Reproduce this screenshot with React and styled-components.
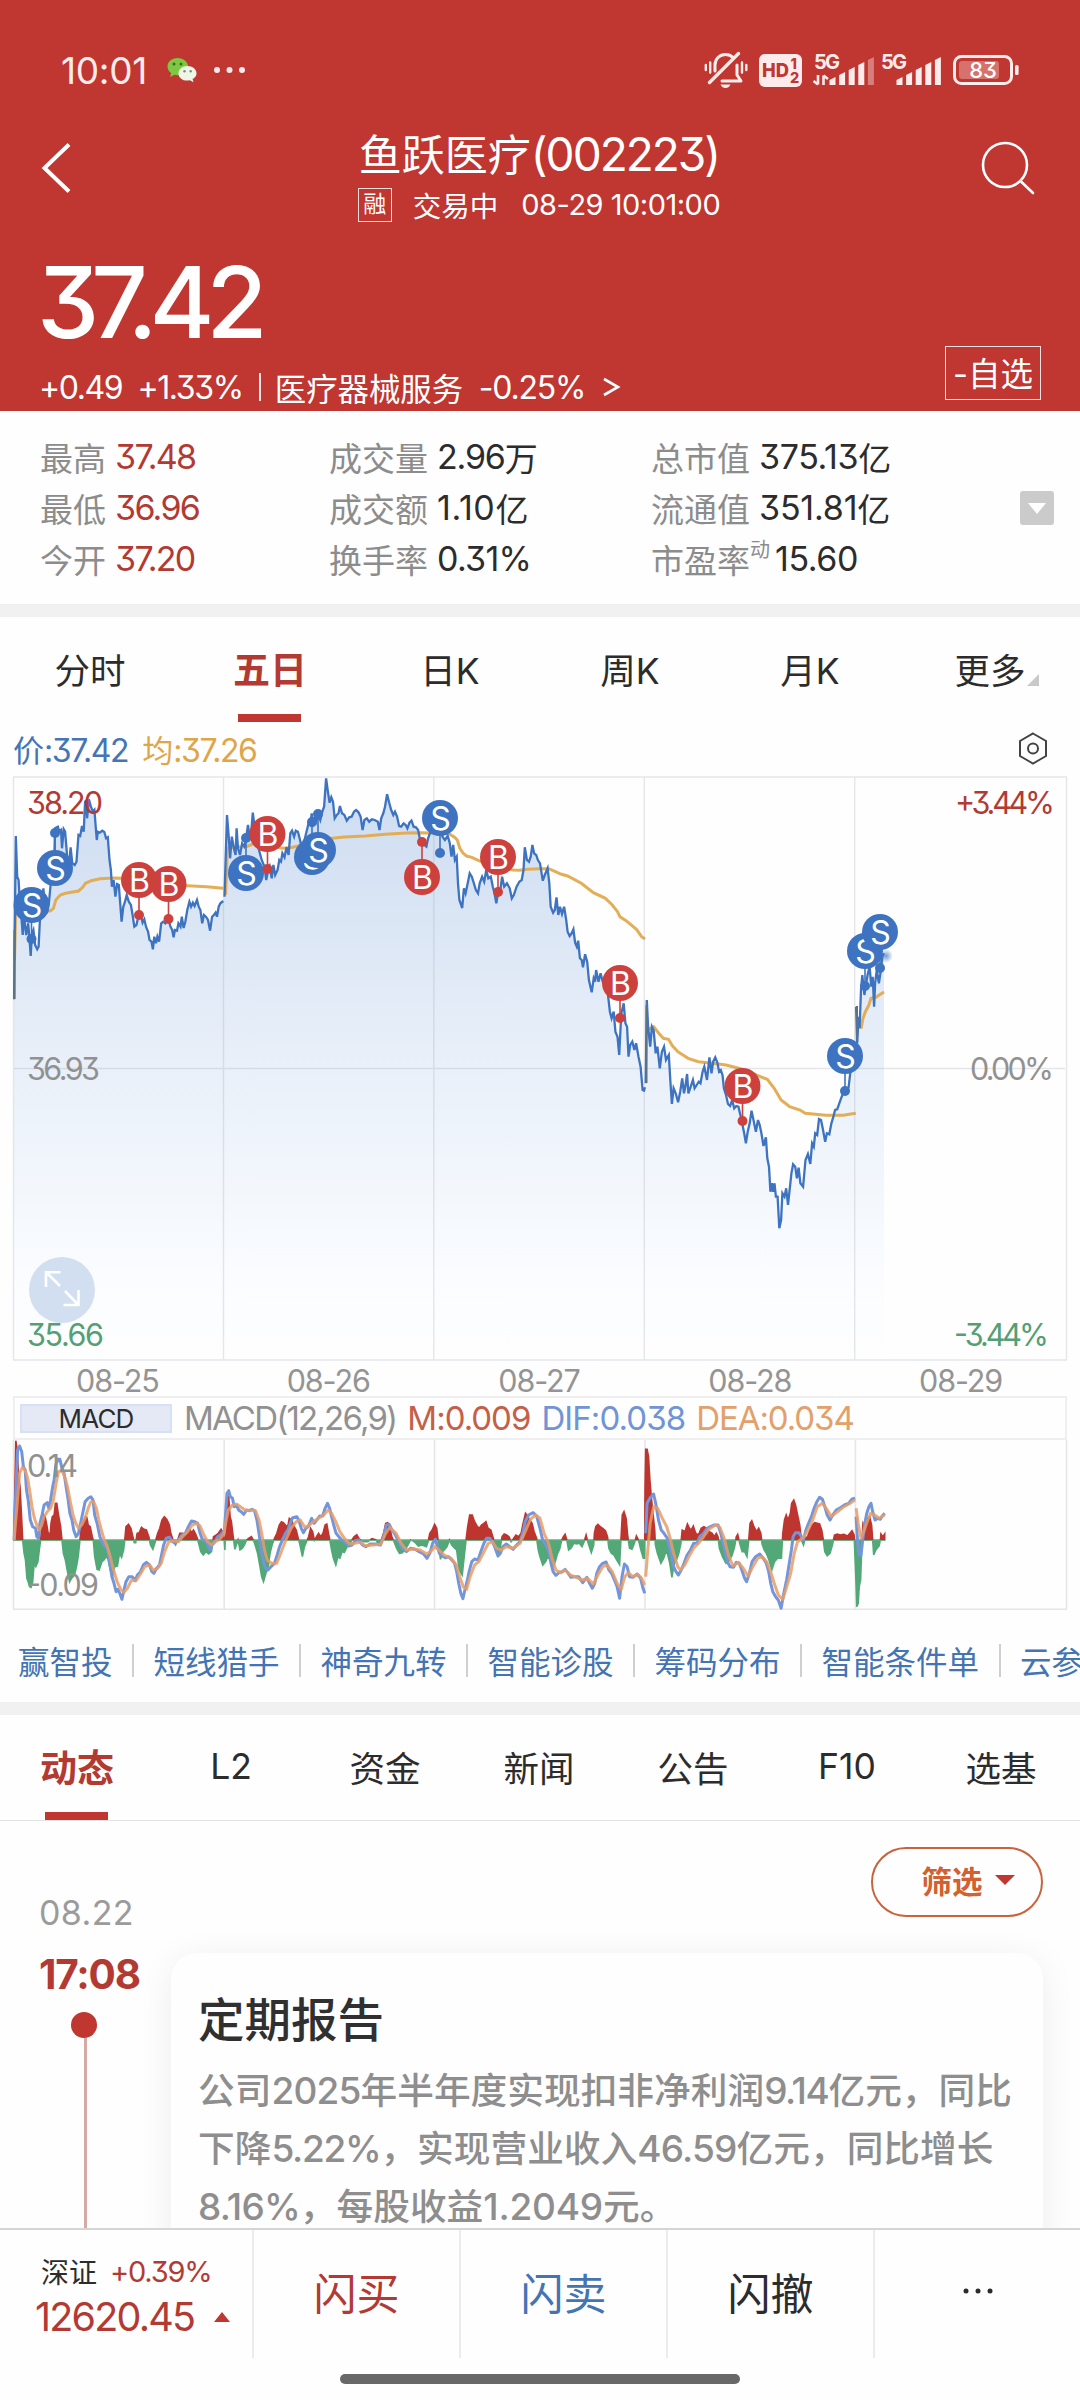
import React from "react";
import styled, { createGlobalStyle, css } from "styled-components";

const RED = "#c03630";
const UP = "#b33a33";
const DOWN = "#549f73";
const BLUE = "#3d73c0";
const ORANGE = "#e2aa4c";
const FONT = `Inter, "Noto Sans CJK SC", sans-serif`;

const GlobalStyle = createGlobalStyle`
  * {
    box-sizing: border-box;
  }
  body {
    margin: 0;
    background: #fefefe;
    font-family: ${FONT};
    font-feature-settings: "cv09" 1;
    color: #2c2c2c;
  }
  svg {
    display: block;
    flex: none;
    overflow: visible;
  }
`;

const Page = styled.div`
  width: 1080px;
  height: 2400px;
  overflow: hidden;
  display: flex;
  flex-direction: column;
  background: #fefefe;
`;

const Num = styled.span`
  font-size: ${(p) => p.$size}px;
  letter-spacing: ${(p) => p.$ls || 0}px;
  font-weight: ${(p) => p.$weight || 400};
  white-space: pre;
`;

/* ---------- header ---------- */

const Header = styled.header`
  height: 411px;
  flex: none;
  background: ${RED};
  color: #fff;
`;

const StatusBar = styled.div`
  height: 118px;
  padding: 40px 61px 18px 61px;
  display: flex;
  align-items: center;
  justify-content: space-between;
  color: #fdeceb;
`;

const StatusSide = styled.div`
  display: flex;
  align-items: center;
  height: 60px;
`;

const StatusIcons = styled(StatusSide)`
  gap: 11px;
  svg + svg:nth-child(4) {
    margin-left: -6px;
  }
`;

const NavBar = styled.div`
  height: 112px;
  display: grid;
  grid-template-columns: 1fr auto 1fr;
  padding: 0 42px 0 40px;
  > svg {
    margin-top: 24px;
  }
  > svg:last-child {
    justify-self: end;
  }
`;

const NavTitle = styled.div`
  display: flex;
  flex-direction: column;
  align-items: center;
  margin-top: 8px;
  h1 {
    margin: 0;
    font-size: 43px;
    font-weight: 400;
    line-height: 56px;
    white-space: nowrap;
  }
`;

const NavSub = styled.div`
  display: flex;
  align-items: center;
  height: 43px;
  font-size: 28.5px;
  white-space: pre;
`;

const MarginTag = styled.span`
  width: 34px;
  height: 34px;
  border: 1.5px solid #f7dedd;
  font-size: 23px;
  line-height: 31px;
  text-align: center;
  margin-right: 21px;
`;

const Quote = styled.div`
  height: 181px;
  display: flex;
  justify-content: space-between;
  align-items: flex-end;
  padding: 0 39px 0 39px;
`;

const Price = styled.div`
  height: 133px;
  padding-top: 10px;
  margin-left: -2px;
  line-height: 124px;
  font-size: 99px;
  font-weight: 450;
  letter-spacing: -8px;
`;

const Change = styled.div`
  height: 48px;
  display: flex;
  align-items: center;
  font-size: 31.4px;
  white-space: pre;
  svg {
    margin-left: 18px;
  }
`;

const Divider = styled.i`
  width: 2px;
  height: 28px;
  background: #fbe5e4;
  margin: 0 14px 0 16px;
`;

const WatchButton = styled.div`
  width: 96px;
  height: 54px;
  margin-bottom: 11px;
  padding-bottom: 4px;
  border: 1.5px solid #f9e2e1;
  display: flex;
  align-items: center;
  justify-content: center;
  font-size: 32.5px;
`;

/* ---------- stats ---------- */

const Stats = styled.section`
  height: 193px;
  flex: none;
  padding: 20px 0 0 40px;
  display: grid;
  grid-template-columns: 289px 322px 369px 34px;
`;

const StatColumn = styled.div`
  display: flex;
  flex-direction: column;
`;

const Stat = styled.div`
  height: 51px;
  display: flex;
  align-items: center;
  font-size: 33px;
  white-space: nowrap;
  color: ${(p) => (p.$up ? UP : "#2c2c2c")};
  label {
    display: flex;
    align-items: flex-start;
    color: #8c8c8c;
    margin-right: ${(p) => (p.$tight ? 5 : 9)}px;
  }
  sup {
    font-size: 20px;
    line-height: 24px;
    margin-top: 3px;
  }
`;

const ExpandStats = styled.div`
  width: 34px;
  height: 34px;
  margin-top: 60px;
  border-radius: 3px;
  background: #cbcbcb;
  display: flex;
  align-items: center;
  justify-content: center;
`;

const Band = styled.div`
  height: 13px;
  flex: none;
  background: #f1f1f1;
`;

/* ---------- tabs ---------- */

const TabRow = styled.nav`
  height: ${(p) => (p.$line ? 106 : 105)}px;
  flex: none;
  display: flex;
  ${(p) =>
    p.$line &&
    css`
      border-bottom: 1px solid #e3e3e3;
    `}
`;

const Tab = styled.div`
  position: relative;
  width: ${(p) => p.$w}px;
  height: 105px;
  padding-bottom: 3px;
  display: flex;
  align-items: center;
  justify-content: center;
  font-size: ${(p) => (p.$active ? 37 : 35.5)}px;
  font-weight: ${(p) => (p.$active ? 700 : 400)};
  color: ${(p) => (p.$active ? UP : "#2c2c2c")};
  white-space: nowrap;
  &::after {
    content: "";
    display: ${(p) => (p.$active ? "block" : "none")};
    position: absolute;
    bottom: 0;
    left: calc(50% - 32px);
    width: 63px;
    height: 8px;
    background: ${RED};
  }
`;

const Corner = styled.i`
  position: absolute;
  left: 127px;
  top: 57px;
  border-left: 12px solid transparent;
  border-bottom: 12px solid #c9c9c9;
`;

/* ---------- charts ---------- */

const Legend = styled.div`
  height: 54px;
  flex: none;
  padding: 0 32px 1px 13px;
  display: flex;
  align-items: center;
  justify-content: space-between;
  font-size: 31px;
`;

const LegendItem = styled.span`
  color: ${(p) => p.$color};
  margin-right: 14px;
`;

const Dates = styled.div`
  height: 35px;
  flex: none;
  margin: 0 14px 0 12px;
  padding-top: 1px;
  display: grid;
  grid-template-columns: repeat(5, 1fr);
  place-items: center;
  color: #949494;
`;

const MacdHead = styled.div`
  height: 44px;
  flex: none;
  margin: 0 13px;
  border: 2px solid #efefef;
  padding-left: 5px;
  display: flex;
  align-items: center;
`;

const IndicatorButton = styled.div`
  width: 152px;
  height: 29px;
  background: #e4e9f5;
  border: 2px solid #d7e0f4;
  display: flex;
  align-items: center;
  justify-content: center;
  margin-right: 12px;
`;

const MacdValue = styled(Num)`
  color: ${(p) => p.$color};
  margin-right: 11px;
`;

/* ---------- tool links ---------- */

const Links = styled.div`
  height: 92px;
  flex: none;
  padding: 8px 0 0 18px;
  display: flex;
  align-items: center;
  overflow: hidden;
`;

const ToolLink = styled.span`
  flex: none;
  font-size: 31.5px;
  color: #4374b3;
  white-space: nowrap;
  display: flex;
  align-items: center;
  & + &::before {
    content: "";
    width: 2px;
    height: 33px;
    margin: 0 19.5px;
    background: #cfcfcf;
  }
`;

/* ---------- feed ---------- */

const Feed = styled.section`
  height: 407px;
  flex: none;
  overflow: hidden;
  display: grid;
  grid-template-columns: 171px 872px;
`;

const Timeline = styled.div`
  padding: 72px 0 0 39px;
  height: 407px;
  display: flex;
  flex-direction: column;
`;

const FeedDate = styled.div`
  height: 40px;
  line-height: 40px;
  color: #9b9b9b;
`;

const FeedTime = styled.div`
  height: 50px;
  margin-top: 17px;
  line-height: 50px;
  color: ${UP};
`;

const TimeDot = styled.i`
  width: 26px;
  height: 26px;
  flex: none;
  margin: 12px 0 0 32px;
  border-radius: 50%;
  background: ${RED};
`;

const TimeLine = styled.i`
  flex: 1;
  width: 3px;
  margin-left: 45px;
  background: #d5a9a6;
`;

const FilterButton = styled.div`
  width: 172px;
  height: 70px;
  margin: 26px 0 36px auto;
  padding: 0 0 4px 22px;
  border: 2px solid #c9623d;
  border-radius: 35px;
  display: flex;
  align-items: center;
  justify-content: center;
  gap: 12px;
  font-size: 30.5px;
  font-weight: 600;
  color: #d3602f;
`;

const Card = styled.article`
  height: 330px;
  padding: 42px 20px 0 27px;
  border-radius: 26px;
  background: #fefefe;
  box-shadow: 0 6px 36px rgba(0, 0, 0, 0.07);
  h2 {
    margin: 0;
    font-size: 46.5px;
    line-height: 50px;
    font-weight: 500;
    color: #303030;
  }
  p {
    margin: 17px 0 0;
    font-size: 36.7px;
    line-height: 58px;
    font-weight: 500;
    color: #8e8e8e;
    white-space: nowrap;
  }
`;

/* ---------- footer ---------- */

const Footer = styled.footer`
  flex: 1;
  border-top: 2px solid #d5d5d5;
  background: #fefefe;
  display: flex;
  flex-direction: column;
  align-items: center;
`;

const Actions = styled.div`
  width: 1080px;
  height: 128px;
  display: flex;
`;

const IndexCell = styled.div`
  width: 252px;
  padding: 20px 0 0 41px;
  display: flex;
  flex-direction: column;
  gap: 4px;
  color: ${UP};
`;

const IndexRow = styled.div`
  height: 42px;
  margin-left: ${(p) => p.$shift || 0}px;
  display: flex;
  align-items: center;
  font-size: 28px;
  em {
    font-style: normal;
    color: #2c2c2c;
    margin-right: 13px;
  }
  svg {
    margin: 0 0 0 20px;
  }
`;

const Action = styled.div`
  width: 207px;
  padding-bottom: 6px;
  border-left: 2px solid #ececec;
  display: flex;
  align-items: center;
  justify-content: center;
  font-size: 43px;
  color: ${(p) => p.$color || "#2c2c2c"};
`;

const HomeBar = styled.div`
  width: 400px;
  height: 10px;
  margin-top: 16px;
  border-radius: 5px;
  background: #686868;
`;

/* ---------- icons ---------- */

const WechatIcon = () => (
  <svg width="30" height="26" viewBox="0 0 30 26">
    <path d="M10.5 1C4.7 1 .5 4.8.5 9.6c0 2.700 1.500 5 3.600 6.600L3.200 20l4.200-2.200c6.500 1.500 13.600-1.700 13.600-8.200C21 4.800 16.300 1 10.500 1z" fill="#7cc843" />
    <circle cx="7" cy="7" r="1.500" fill="#3d6a20" />
    <circle cx="14" cy="7" r="1.500" fill="#3d6a20" />
    <path d="M20.500 9c-5 0-9 3.200-9 7.400 0 4.900 5.500 8.300 11.400 6.900l3.600 2-.9-3.200c2.300-1.300 3.900-3.300 3.900-5.700C29.500 12.200 25.500 9 20.500 9z" fill="#eef6e8" />
    <circle cx="17.500" cy="14.300" r="1.200" fill="#7c8a76" />
    <circle cx="23.700" cy="14.300" r="1.200" fill="#7c8a76" />
  </svg>
);

const MuteIcon = () => (
  <svg width="44" height="38" viewBox="0 0 44 38" fill="none" stroke="#fdeceb" strokeWidth="3" strokeLinecap="round" strokeLinejoin="round">
    <path d="M11 20v-6c0-6 4.500-10.500 10.500-10.500 3 0 5.500 1 7.500 3M33 14v10l4 6H18" />
    <path d="M5.500 31.500 34.500 2.500" strokeWidth="3.400" />
    <path d="M16.500 33.500h10c-1 2.500-3 3.500-5 3.500s-4-1-5-3.500z" fill="#fdeceb" stroke="none" />
    <path d="M1.800 14v5M6.200 11.500v10M38 11.500v10M42.300 14v5" strokeWidth="2.400" />
  </svg>
);

const HdIcon = () => (
  <svg width="43" height="33" viewBox="0 0 43 33" fontFamily="Inter" fontWeight="800" fill={RED}>
    <rect width="43" height="33" rx="6" fill="#fdeceb" />
    <text x="3" y="23" fontSize="19" textLength="27" lengthAdjust="spacingAndGlyphs">HD</text>
    <text x="31.500" y="15" fontSize="14.500">1</text>
    <text x="31" y="29" fontSize="14.500">2</text>
  </svg>
);

const Signal = ({ arrows, weak }) => (
  <svg width="62" height="34" viewBox="0 0 62 34" fill="#fdeceb">
    <text x="1" y="16" fontFamily="Inter" fontWeight="700" fontSize="20" textLength="26">5G</text>
    {arrows && <path d="M5 22v9.500M.5 28l4.500 3.500M10.500 32v-9.500M10.500 22.500l4.500 3.500" stroke="#fdeceb" strokeWidth="2.600" fill="none" />}
    {[8, 13, 18, 23, 28].map((h, i) => (
      <path
        key={h}
        d={`M${16.500 + i * 9.600} 32v-${h - 3}l6-3v${h}z`}
        opacity={weak && i === 4 ? 0.4 : 1}
      />
    ))}
  </svg>
);

const BatteryIcon = () => (
  <svg width="66" height="30" viewBox="0 0 66 30">
    <rect x="1.500" y="1.500" width="57" height="27" rx="7" fill="none" stroke="#fdeceb" strokeWidth="3" />
    <rect x="6" y="6" width="40" height="18" rx="3" fill="#d7716c" />
    <rect x="62" y="10" width="3.600" height="10" rx="1.500" fill="#fdeceb" />
    <text x="30" y="23" textAnchor="middle" fontFamily="Inter" fontWeight="500" fontSize="22" fill="#fff">83</text>
  </svg>
);

const BackIcon = () => (
  <svg width="32" height="52" viewBox="0 0 32 52" fill="none" stroke="#fff" strokeWidth="4">
    <path d="M29 2.500 4.500 26 29 49.500" />
  </svg>
);

const SearchIcon = () => (
  <svg width="56" height="56" viewBox="0 0 56 56" fill="none" stroke="#fff" strokeWidth="2.600" strokeLinecap="round">
    <circle cx="23" cy="23" r="22" />
    <path d="M38.500 39 51 51" />
  </svg>
);

const HexIcon = () => (
  <svg width="30" height="33" viewBox="0 0 30 33" fill="none" stroke="#444" strokeWidth="2">
    <path d="M15 1.500 28 9v15L15 31.500 2 24V9z" />
    <circle cx="15" cy="16.500" r="5" />
  </svg>
);

/* ---------- chart data ---------- */

// Series are sampled tile by tile; a tile is 540px wide and has its own origin.
const KX = 540 / 1568;
const KY = 1 / 3;

const toPoints = (...tiles) =>
  tiles.flatMap(([ox, oy, text]) =>
    text
      .trim()
      .split(/\s+/)
      .map((pair) => {
        const [x, y] = pair.split(",").map(Number);
        return [ox + x * KX, oy + y * KY];
      })
  );

const toLine = (points) =>
  points.map(([x, y], i) => `${i ? "L" : "M"}${x.toFixed(1)} ${y.toFixed(1)}`).join("");

const PRICE = [
  toPoints([0, 760, `41,718 43,500 46,228 50,350 54,360 58,440 62,470 66,525 70,470 76,525 82,490 86,540 89,588 93,520 97,510 102,555
    108,568 112,560 116,480 122,430 126,385 130,440 136,460 142,430 147,375 152,330 158,280 160,205 168,200 172,215 177,210 180,265
    185,208 189,215 193,265 197,320 201,310 205,262 210,310 217,315 222,305 228,225 233,228 238,198 243,215 247,125 250,122 253,175
    258,118 264,140 270,155 274,150 278,200 281,240 284,215 290,218 297,212 303,216 308,235 313,232 318,300 322,330 325,380 330,360
    335,410 340,372 345,375 349,430 353,485 358,440 363,425 368,405 374,425 380,435 385,465 390,500 396,495 403,464 410,470 414,488
    419,478 424,500 430,515 434,540 440,545 444,568 448,530 453,550 457,530 462,545 468,490 474,485 480,490 489,478 495,500 500,510
    504,532 508,510 514,512 518,490 524,500 528,470 533,504 538,485 544,450 550,425 555,440 560,428 565,438 572,420 577,440 582,450
    587,490 592,465 598,470 604,480 610,512 616,470 621,465 626,458 630,470 635,440 640,430 648,423`]),
  toPoints([0, 760, `652,410 655,300 659,165 664,230 668,295 673,230 680,270 684,285 687,205 691,265 697,285 703,250 710,260 715,232
    720,195 726,240 730,210 734,158 739,200 745,240 752,270 760,300 768,320 773,360 778,335 783,320 789,355 794,315 799,345 806,330
    811,300 816,305 820,280 826,292 832,262 838,285 843,220 848,212 854,230 859,212 865,215 870,235 876,262 883,245 890,215 896,190
    901,195 905,160 909,200 914,170 918,185 924,163 930,180 936,155 941,140 947,55 952,95 957,128 962,112 967,125 972,175 978,165
    983,160 987,138 993,160 1000,165 1007,182 1014,172 1021,170 1028,155 1034,150 1041,157 1047,170 1053,210 1058,180 1065,175
    1072,185 1080,178 1088,180 1097,185 1102,210 1107,175 1113,160 1118,140 1124,103 1130,128 1136,150 1142,165 1147,155 1153,170
    1159,198 1165,200 1172,190 1178,195 1183,205 1189,188 1195,182 1201,200 1208,202 1214,210 1219,235 1225,247 1232,255 1238,260
    1243,235 1250,215 1256,190`]),
  toPoints(
    [0, 760, `1262,200 1270,225 1278,180 1285,230 1292,240 1300,228 1306,250 1311,290 1316,255 1321,300 1326,290 1330,370 1334,420
    1342,444 1347,385 1352,400 1358,370 1364,340 1370,350 1376,370 1382,390 1388,400 1393,370 1400,350 1406,365 1412,330 1418,355
    1425,350 1431,380 1436,400 1441,430 1446,400 1452,395 1458,350 1464,380 1472,370 1480,385 1486,415 1492,405 1500,380 1508,365
    1515,360 1520,330 1524,262 1530,300 1536,305 1541,290 1546,255 1551,280 1557,285 1562,300`],
    [540, 760, `0,310 8,362 14,345 22,325 27,370 31,440 38,458 43,450 48,412 53,465 58,440 64,462 70,440 76,480 80,515 86,528 92,520
    97,508 102,548 107,560 111,542 116,595 121,600 125,622 131,583 137,605 142,660 150,697 156,655 160,665 163,630 170,665 176,640
    182,665 190,680 197,700 203,755 208,775 214,755 219,815 225,830 230,885 236,760 243,730 248,790 253,800 257,890 262,855 268,845
    274,870 279,850 286,890 292,920 295,955 298,990 302,992 305,982`]
  ),
  toPoints([540, 1000, `307,250 310,0 314,80 320,140 325,80 330,90 336,160 341,140 348,205 354,155 360,140 366,180 374,165 379,250
    383,312 388,265 394,280 401,307 407,275 413,235 418,280 422,260 427,222 431,280 437,262 444,240 449,265 455,255 461,245 466,250
    472,215 477,200 485,240 492,172 498,220 503,185 509,172 515,188 520,215 525,210 530,225 534,265 540,285 546,312 552,318 558,300
    564,325 570,318 576,320 583,350 588,375 593,400 598,430 603,395 609,370 614,332 620,360 627,395 633,360 638,375 643,400 649,438
    656,412 660,475 665,500 669,575 673,550 677,575 681,550 685,590 690,590 695,685 700,660 704,580 710,590 715,565 720,615 726,560
    730,520 735,493 741,500 746,535 751,503 756,550 764,560 771,480 778,462 785,492 790,430 795,440 799,400 805,405 810,357 816,360
    821,385 828,425 833,400 840,403 846,370 852,350 857,330 863,328 869,310 876,290 884,272 890,280 896,262 901,218 908,200`]),
  toPoints([540, 760, `918,740 921,850 925,770 928,805 932,690 936,645 942,705 947,670 952,640 957,620 962,680 966,650 970,740 973,670
    978,630 984,670 990,630 994,590 999,580`]),
];

const AVERAGE = [
  toPoints([0, 760, `42,600 46,440 80,450 120,455 147,452 155,445 162,420 175,405 190,400 228,393 240,382 248,370 265,362 290,356
    330,354 350,355 400,362 450,368 500,374 545,377 600,380 648,385`]),
  toPoints([0, 760, `655,405 660,265 680,262 715,260 740,250 775,255 820,265 850,262 880,255 920,245 965,235 1000,231 1060,228
    1120,223 1180,219 1225,218 1256,220`]),
  toPoints(
    [0, 760, `1262,215 1305,222 1320,232 1328,240 1335,265 1345,280 1355,288 1370,292 1390,302 1440,318 1490,330 1510,331 1530,328`],
    [540, 760, `0,326 25,326 45,335 60,342 80,348 120,370 155,398 190,415 210,435 225,455 232,470 250,482 280,508 295,530 305,537`]
  ),
  toPoints([540, 1000, `312,90 330,80 345,100 358,115 373,118 385,138 400,155 430,175 460,185 500,190 540,195 585,207 640,230
    660,238 680,265 700,300 725,320 755,330 770,340 830,346 880,346 917,340`]),
  toPoints([540, 760, `932,806 938,775 945,755 955,735 961,715 975,712 985,705 999,696`]),
];

const HISTOGRAM = toPoints(
  [0, 1390, `40,451 43,300 46,152 50,180 54,260 58,290 62,370 66,451 70,490 74,510 78,565 82,575 86,590 90,592 95,575 99,520 104,530
    110,515 114,480 118,451 122,400 127,375 131,380 136,405 140,430 146,430 148,400 152,380 157,375 161,340 165,340 170,375 176,410
    180,451 184,490 190,510 196,545 202,575 208,565 216,555 222,530 227,500 232,451 236,410 242,395 248,380 252,382 256,405 262,410
    268,440 271,451 275,500 282,538 288,540 296,515 302,510 308,500 313,505 320,540 327,560 333,530 341,528 347,490 353,502 359,480
    362,451 366,410 373,403 380,415 386,440 390,458 394,458 398,430 404,428 411,412 418,418 425,420 432,440 437,465 444,478 451,455
    458,430 464,415 470,390 477,380 484,388 492,405 496,430 503,451 510,465 516,451 522,430 530,430 538,440 545,428 551,418 556,428
    562,420 567,430 573,445 578,465 583,485 590,495 598,485 606,492 614,485 620,440 627,436 634,430 642,418 646,425 651,451 653,480
    655,410 659,330 664,320 668,380 672,395 677,440 682,478 686,465 691,450 697,480 704,475 710,465 716,450 722,445 730,440 736,451
    741,465 748,490 755,530 760,560 765,575 772,550 779,530 784,490 790,465 797,445 804,430 811,405 817,395 823,398 829,405 835,412
    840,385 847,390 853,408 860,420 866,445 871,465 878,500 884,470 890,455 896,440 902,415 908,425 913,451 919,440 925,430 931,440
    938,430 944,405 949,402 954,430 958,451 963,480 968,505 975,525 981,500 987,505 993,485 1000,487 1008,470 1016,462 1022,450
    1028,440 1036,434 1044,448 1056,455 1068,455 1080,446 1092,450 1100,465 1107,450 1114,430 1120,400 1126,398 1132,415 1138,440
    1144,455 1152,475 1160,490 1168,488 1176,480 1184,465 1192,450 1198,452 1206,458 1215,468 1225,465 1238,470 1243,455 1248,430
    1255,420 1262,403 1268,415 1272,451 1279,508 1285,485 1292,478 1298,470 1305,450 1312,465 1320,475 1326,480 1333,540 1342,555
    1348,500 1353,451 1358,410 1364,375 1371,375 1378,395 1385,408 1392,415 1398,405 1405,400 1411,395 1417,415 1425,420 1431,440
    1438,465 1445,495 1452,475 1458,440 1464,432 1471,435 1478,440 1484,455 1490,448 1498,435 1506,440 1513,430 1519,400 1526,370
    1532,378 1538,390 1545,400 1551,425 1558,445 1563,480`],
  [540, 1390, `0,500 8,525 16,515 23,500 30,510 37,535 44,515 51,490 57,478 63,451 68,440 73,433 78,451 83,480 90,475 98,460 106,462
    114,460 122,470 128,455 134,435 140,460 149,488 156,465 158,430 162,410 168,403 175,410 182,415 190,422 196,440 200,475 207,490
    215,495 223,510 231,524 235,451 239,375 244,365 250,385 255,440 260,475 267,478 274,460 280,438 286,450 293,480 300,505 304,505
    305,300 307,178 311,178 315,200 319,270 324,330 329,380 333,420 335,465 341,490 351,520 359,505 364,490 370,490 377,520 383,562
    390,520 397,508 403,490 409,460 413,420 421,425 428,402 434,415 439,420 445,408 452,430 460,435 468,415 476,410 484,415 492,425
    500,430 506,440 512,430 517,440 521,475 530,500 540,520 548,515 558,495 565,470 570,440 574,433 580,460 587,485 594,485 601,500
    606,451 610,400 615,392 621,410 629,425 635,415 641,430 645,462 651,480 657,490 665,510 673,540 681,515 690,505 701,505 705,430
    710,390 715,375 720,390 727,370 731,340 737,330 742,345 748,375 754,405 759,450 765,465 770,445 777,440 783,420 790,405 798,398
    805,400 812,402 818,420 822,445 827,485 834,497 842,490 849,465 855,435 863,432 872,435 882,433 893,438 900,430 906,422 912,435
    917,560 920,650 924,640 927,590 931,570 935,450 938,400 943,410 950,385 957,380 963,405 966,451 969,495 975,480 985,467 989,445
    990,432 996,440 1001,432 1001,451`]
);

const DIF = [
  toPoints([0, 1390, `41,450 46,300 51,180 57,168 63,185 68,230 73,240 77,300 82,330 88,390 95,410 103,415 107,440 112,445 116,400
    122,375 128,345 137,338 142,355 147,330 153,290 157,270 162,225 168,208 174,208 180,235 186,250 192,290 198,330 203,370 209,390
    214,420 221,440 228,430 234,400 240,370 247,335 256,325 264,320 270,330 275,375 282,400 290,440 298,460 306,470 313,480 319,520
    325,560 331,580 337,605 342,598 348,610 354,628 360,600 366,575 374,560 384,560 392,572 399,555 408,545 416,525 425,517 434,525
    441,545 447,550 455,535 463,525 468,500 475,465 483,445 492,442 499,452 508,460 518,450 528,435 538,430 547,410 556,393 565,395
    574,400 581,430 588,450 596,450 603,465 610,480 616,465 624,455 632,440 640,435 648,425 651,430 655,370 659,310 664,302 669,320
    675,325 680,350 686,345 693,360 700,365 708,373 716,360 724,362 732,358 739,362 746,390 752,430 757,470 762,500 769,530 778,540
    787,530 797,520 805,495 812,470 820,450 829,430 836,420 843,400 850,383 862,380 869,395 875,415 881,428 888,415 895,410 905,385
    912,400 920,390 928,378 937,378 944,355 951,340 957,355 963,380 969,405 976,430 984,440 992,450 1002,455 1012,468 1022,465
    1032,452 1042,450 1052,465 1062,470 1075,462 1090,462 1105,465 1114,440 1122,405 1130,403 1138,420 1148,435 1158,455 1168,475
    1180,485 1192,475 1205,478 1217,485 1230,492 1240,505 1248,490 1256,460 1264,448 1268,462 1276,490 1284,498 1293,503 1302,500
    1312,510 1320,520 1326,545 1332,580 1338,610 1344,626 1350,600 1356,575 1362,545 1370,515 1378,507 1388,510 1396,485 1405,460
    1413,445 1422,445 1430,455 1438,475 1446,498 1453,490 1460,470 1470,462 1480,470 1490,478 1500,465 1510,455 1518,430 1525,395
    1535,375 1548,368 1558,378`],
    [540, 1390, `0,415 8,452 18,465 26,490 32,520 38,545 46,556 56,547 65,545 73,538 82,550 90,562 100,560 112,560 124,578 136,562
    144,580 152,595 159,580 165,550 173,530 182,520 192,516 200,540 208,550 216,570 224,590 231,625 238,560 245,522 253,530 260,560
    270,562 282,552 292,565 298,590 304,610`]),
  toPoints([540, 1390, `307,430 311,340 319,325 330,312 336,340 344,390 352,420 360,430 370,445 376,470 382,500 388,530 395,545
    402,555 410,540 418,520 427,495 437,480 446,460 456,460 464,440 475,430 485,415 495,410 505,405 517,405 525,430 532,460 538,485
    544,515 552,530 562,532 570,517 578,520 586,540 594,565 600,575 608,550 616,515 626,500 638,492 648,505 657,520 664,545 670,580
    676,605 684,620 692,630 700,655 708,610 716,570 724,520 730,480 735,440 742,428 752,428 759,440 765,450 772,420 780,400 788,380
    796,355 804,335 812,322 820,328 827,350 834,375 842,390 850,375 860,360 872,353 884,345 896,340 905,328 915,325`]),
  toPoints([540, 1390, `918,380 922,450 926,495 932,495 937,450 943,400 949,370 955,350 961,340 967,370 973,390 980,385 988,388
    994,378 1001,370`]),
];

const DEA = [
  toPoints([0, 1390, `41,450 50,340 57,250 65,232 73,240 80,265 86,300 93,350 100,385 107,405 114,420 121,405 128,380 137,365 147,355
    155,330 163,280 170,245 180,242 188,260 196,290 204,335 212,375 220,400 228,415 237,405 247,385 256,355 264,335 272,335 280,355
    287,390 294,420 303,450 312,470 320,500 330,540 340,575 350,597 360,607 370,595 382,570 395,572 406,555 420,530 434,525 445,540
    457,535 468,520 478,485 490,455 504,452 518,455 530,440 545,425 558,405 570,400 581,408 592,435 603,455 614,465 625,455 638,448
    650,432 655,400 663,360 675,345 688,343 700,352 715,362 730,360 742,362 752,390 760,430 768,480 776,510 788,520 803,520 815,490
    830,450 845,415 860,395 872,390 885,412 895,408 910,395 925,385 940,375 953,360 963,370 975,395 987,425 1000,445 1015,462
    1030,460 1045,457 1060,467 1085,465 1105,463 1120,430 1132,412 1150,430 1165,460 1180,480 1200,477 1220,480 1240,492 1255,480
    1262,470 1275,480 1290,495 1310,505 1325,525 1335,560 1345,590 1355,598 1365,560 1378,525 1390,515 1403,490 1418,460 1430,455
    1442,475 1455,480 1470,470 1490,475 1510,460 1525,425 1540,388 1555,375`],
    [540, 1390, `0,385 12,430 25,460 35,505 46,540 60,548 73,540 88,555 105,562 122,570 138,565 155,582 168,555 182,530 195,525
    210,545 224,580 236,598 246,560 256,548 270,560 284,553 295,565 304,585`]),
  toPoints([540, 1390, `307,560 313,480 320,400 330,350 342,355 355,385 368,410 378,445 388,490 400,530 408,540 420,525 432,500
    446,475 460,460 475,440 490,418 510,405 522,412 535,445 547,495 560,528 576,517 590,535 604,558 618,530 632,505 645,500 658,515
    668,540 680,580 692,615 705,628 715,595 728,550 738,490 748,455 762,445 776,425 790,395 805,350 820,340 833,358 846,380 860,368
    880,352 897,342 915,330`]),
  toPoints([540, 1390, `918,355 924,400 932,445 940,425 950,395 960,370 972,375 985,385 1001,374`]),
];

// [side, x, badge y, dot y]
const TRADES = [
  ["S", 31.500, 905, 939],
  ["S", 55, 868, 833],
  ["B", 139, 880, 915],
  ["B", 168.500, 884, 919],
  ["S", 246, 873, 838],
  ["B", 267.500, 834, 869],
  ["S", 312, 857, 822],
  ["S", 318, 850, 814],
  ["B", 422, 877, 842],
  ["S", 440, 818, 853],
  ["B", 498, 857, 892],
  ["B", 620, 983, 1018],
  ["B", 742.500, 1086, 1121],
  ["S", 845, 1056, 1091],
  ["S", 865, 951, 986],
  ["S", 880, 932, 968],
];

const GRID_X = [223.500, 433.800, 644.300, 854.700];

const AREA = PRICE.flat();

const AxisLabel = ({ x, y, w, color, end, children }) => (
  <text x={end ? x - w : x} y={y} fontFamily="Inter" fontSize="30.500" fill={color} textLength={w}>
    {children}
  </text>
);

const PriceChart = () => (
  <svg width="1080" height="585" viewBox="0 776 1080 585">
    <defs>
      <linearGradient id="fill" x1="0" y1="776" x2="0" y2="1360" gradientUnits="userSpaceOnUse">
        <stop offset="0" stopColor="#cddcf1" />
        <stop offset="0.500" stopColor="#e9f0f9" />
        <stop offset="0.850" stopColor="#fafcff" />
        <stop offset="1" stopColor="#fefefe" />
      </linearGradient>
      <radialGradient id="glow">
        <stop offset="0" stopColor={BLUE} stopOpacity="0.700" />
        <stop offset="1" stopColor={BLUE} stopOpacity="0" />
      </radialGradient>
    </defs>
    <path d={`${toLine(AREA)}V1359H14Z`} fill="url(#fill)" />
    {AVERAGE.map((day, i) => (
      <path key={i} d={toLine(day)} fill="none" stroke={ORANGE} strokeWidth="3" strokeOpacity="0.950" />
    ))}
    <path
      d={`M13 777H1067M13 1360H1067M13.500 777V1360M1066.500 777V1360${GRID_X.map((x) => `M${x} 777V1360`).join("")}M13 1068.500H1065`}
      stroke="#9aa3b0"
      strokeOpacity="0.260"
      strokeWidth="1.400"
    />
    {PRICE.map((day, i) => (
      <path key={i} d={toLine(day)} fill="none" stroke={BLUE} strokeWidth="2.300" />
    ))}
    <path d="M14.500 930V999M646.500 1005V1083M857 1006V1040" stroke="#5d7384" strokeWidth="2" />
    <AxisLabel x={27} y={814} w={76} color={UP}>38.20</AxisLabel>
    <AxisLabel x={27} y={1080} w={73} color="#919191">36.93</AxisLabel>
    <AxisLabel x={1055} y={814} w={100} color={UP} end>+3.44%</AxisLabel>
    <AxisLabel x={1054} y={1080} w={84} color="#919191" end>0.00%</AxisLabel>
    <AxisLabel x={1049} y={1346} w={95} color={DOWN} end>-3.44%</AxisLabel>
    <circle cx="886" cy="956" r="7" fill="url(#glow)" />
    {TRADES.map(([side, x, y, dot]) => {
      const color = side === "S" ? BLUE : "#cc413d";
      return (
        <g key={`${x}-${y}`}>
          <path d={`M${x} ${y}V${dot}`} stroke={color} strokeWidth="1.600" />
          <circle cx={x} cy={dot} r="5" fill={color} />
          <circle cx={x} cy={y} r="18" fill={color} />
          <text x={x + 0.500} y={y + 11.500} textAnchor="middle" fontFamily="Inter" fontSize="32" fill="#fff">
            {side}
          </text>
        </g>
      );
    })}
    <circle cx="62" cy="1290" r="33" fill="#d2dff0" />
    <path d="M60 1286 46.500 1272.500M60.500 1272.200H46V1287M65 1291 78 1304.500M63.500 1305H78.500V1290" fill="none" stroke="#fff" strokeWidth="2.600" />
    <AxisLabel x={27} y={1346} w={77} color={DOWN}>35.66</AxisLabel>
  </svg>
);

const MacdChart = () => (
  <svg width="1080" height="170" viewBox="0 1440 1080 170">
    <clipPath id="above">
      <rect x="0" y="1440" width="1080" height="100.300" />
    </clipPath>
    <clipPath id="below">
      <rect x="0" y="1540.300" width="1080" height="70" />
    </clipPath>
    <path
      d={`M13 1609.300H1067M13.500 1440V1610M1066.500 1440V1610${GRID_X.map((x) => `M${x + 0.700} 1440V1610`).join("")}`}
      stroke="#e6e6e6"
      strokeWidth="1.600"
    />
    <path d={`${toLine(HISTOGRAM)}Z`} fill="#be352f" stroke="#be352f" strokeWidth="1.600" clipPath="url(#above)" />
    <path d={`${toLine(HISTOGRAM)}Z`} fill="#52a876" stroke="#52a876" strokeWidth="1.600" clipPath="url(#below)" />
    {DIF.map((part, i) => (
      <path key={i} d={toLine(part)} fill="none" stroke="#7395dc" strokeWidth="3" strokeLinejoin="round" />
    ))}
    {DEA.map((part, i) => (
      <path key={i} d={toLine(part)} fill="none" stroke="#e79c68" strokeOpacity="0.850" strokeWidth="3" strokeLinejoin="round" />
    ))}
    <AxisLabel x={27} y={1477} w={51} color="#919191">0.14</AxisLabel>
    <AxisLabel x={27} y={1596} w={72} color="#919191">-0.09</AxisLabel>
  </svg>
);

/* ---------- page ---------- */

// name, value, letter spacing of the value, unit
const STATS = [
  [
    ["最高", "37.48", -1.700],
    ["最低", "36.96", -1.700],
    ["今开", "37.20", -1.700],
  ],
  [
    ["成交量", "2.96", -1.200, "万"],
    ["成交额", "1.10", 0.600, "亿"],
    ["换手率", "0.31%", -0.700],
  ],
  [
    ["总市值", "375.13", -0.400, "亿"],
    ["流通值", "351.81", -0.200, "亿"],
    ["市盈率", "15.60", -0.400],
  ],
];

const PERIODS = ["分时", "五日", "日K", "周K", "月K", "更多"];
const SECTIONS = ["动态", "L2", "资金", "新闻", "公告", "F10", "选基"];
const TOOLS = ["赢智投", "短线猎手", "神奇九转", "智能诊股", "筹码分布", "智能条件单", "云参数"];
const DAYS = ["08-25", "08-26", "08-27", "08-28", "08-29"];

const App = () => (
  <Page>
    <GlobalStyle />
    <Header>
      <StatusBar>
        <StatusSide>
          <Num $size={37} $ls={-0.3}>10:01</Num>
          <svg width="20" height="1" />
          <WechatIcon />
          <svg width="52" height="8" viewBox="0 0 52 8" fill="#fdeceb">
            <circle cx="20" cy="4" r="3" />
            <circle cx="32.500" cy="4" r="3" />
            <circle cx="45" cy="4" r="3" />
          </svg>
        </StatusSide>
        <StatusIcons>
          <MuteIcon />
          <HdIcon />
          <Signal arrows weak />
          <Signal />
          <BatteryIcon />
        </StatusIcons>
      </StatusBar>
      <NavBar>
        <BackIcon />
        <NavTitle>
          <h1>
            鱼跃医疗<Num $size={46} $ls={-2}>(002223)</Num>
          </h1>
          <NavSub>
            <MarginTag>融</MarginTag>
            交易中<Num $size={29} $ls={-0.5}>{"   08-29 10:01:00"}</Num>
          </NavSub>
        </NavTitle>
        <SearchIcon />
      </NavBar>
      <Quote>
        <div>
          <Price>37.42</Price>
          <Change>
            <Num $size={32} $ls={-1.4}>+0.49  +1.33%</Num>
            <Divider />
            医疗器械服务<Num $size={32} $ls={-1.2}>{"  -0.25%"}</Num>
            <svg width="18" height="20" viewBox="0 0 18 20" fill="none" stroke="#fff" strokeWidth="2.600">
              <path d="M1 2 15 10 1 18" />
            </svg>
          </Change>
        </div>
        <WatchButton>-自选</WatchButton>
      </Quote>
    </Header>

    <Stats>
      {STATS.map((column, i) => (
        <StatColumn key={i}>
          {column.map(([name, value, spacing, unit]) => (
            <Stat key={name} $up={i === 0} $tight={name === "市盈率"}>
              <label>
                {name}
                {name === "市盈率" && <sup>动</sup>}
              </label>
              <Num $size={34} $ls={spacing}>{value}</Num>
              {unit}
            </Stat>
          ))}
        </StatColumn>
      ))}
      <ExpandStats>
        <svg width="18" height="11" viewBox="0 0 18 11">
          <path d="M0 0H18L9 11z" fill="#fff" />
        </svg>
      </ExpandStats>
    </Stats>
    <Band />

    <TabRow>
      {PERIODS.map((name) => (
        <Tab key={name} $w={180} $active={name === "五日"}>
          {name}
          {name === "更多" && <Corner />}
        </Tab>
      ))}
    </TabRow>
    <Legend>
      <div>
        <LegendItem $color="#4575b5">
          价<Num $size={32} $ls={-1.4}>:37.42</Num>
        </LegendItem>
        <LegendItem $color="#dfa548">
          均<Num $size={32} $ls={-1.4}>:37.26</Num>
        </LegendItem>
      </div>
      <HexIcon />
    </Legend>
    <PriceChart />
    <Dates>
      {DAYS.map((day) => (
        <Num key={day} $size={30.500} $ls={-1.100}>{day}</Num>
      ))}
    </Dates>
    <MacdHead>
      <IndicatorButton>
        <Num $size={26} $ls={-0.8}>MACD</Num>
      </IndicatorButton>
      <MacdValue $size={33} $ls={-1.8} $color="#919191">MACD(12,26,9)</MacdValue>
      <MacdValue $size={33} $ls={-1} $color="#c55f45">M:0.009</MacdValue>
      <MacdValue $size={33} $ls={-0.9} $color="#7194d6">DIF:0.038</MacdValue>
      <MacdValue $size={33} $ls={-1.1} $color="#e2a06b">DEA:0.034</MacdValue>
    </MacdHead>
    <MacdChart />
    <Links>
      {TOOLS.map((name) => (
        <ToolLink key={name}>{name}</ToolLink>
      ))}
    </Links>
    <Band />

    <TabRow $line>
      {SECTIONS.map((name) => (
        <Tab key={name} $w={154} $active={name === "动态"}>
          {name}
        </Tab>
      ))}
    </TabRow>
    <Feed>
      <Timeline>
        <FeedDate>
          <Num $size={34} $ls={0.4}>08.22</Num>
        </FeedDate>
        <FeedTime>
          <Num $size={40.500} $ls={-1.2} $weight={700}>17:08</Num>
        </FeedTime>
        <TimeDot />
        <TimeLine />
      </Timeline>
      <div>
        <FilterButton>
          筛选
          <svg width="20" height="10" viewBox="0 0 20 10">
            <path d="M0 0H20L10 10z" fill={RED} />
          </svg>
        </FilterButton>
        <Card>
          <h2>定期报告</h2>
          <p>
            公司<Num $size={37} $ls={-0.8} $weight={500}>2025</Num>年半年度实现扣非净利润
            <Num $size={37} $ls={-1.4} $weight={500}>9.14</Num>亿元，同比
            <br />
            下降<Num $size={37} $ls={-1.3} $weight={500}>5.22%</Num>，实现营业收入
            <Num $size={37} $ls={-0.8} $weight={500}>46.59</Num>亿元，同比增长
            <br />
            <Num $size={37} $ls={-0.8} $weight={500}>8.16%</Num>，每股收益
            <Num $size={37} $ls={-0.2} $weight={500}>1.2049</Num>元。
          </p>
        </Card>
      </div>
    </Feed>

    <Footer>
      <Actions>
        <IndexCell>
          <IndexRow>
            <em>深证</em>
            <Num $size={29} $ls={-1.2}>+0.39%</Num>
          </IndexRow>
          <IndexRow $shift={-6}>
            <Num $size={39.500} $ls={-1.8}>12620.45</Num>
            <svg width="16" height="10" viewBox="0 0 16 10">
              <path d="M0 10H16L8 0z" fill={RED} />
            </svg>
          </IndexRow>
        </IndexCell>
        <Action $color={UP}>闪买</Action>
        <Action $color="#4374b3">闪卖</Action>
        <Action>闪撤</Action>
        <Action>
          <svg width="32" height="6" viewBox="0 0 32 6" fill="#2c2c2c">
            <circle cx="4" cy="3" r="2.500" />
            <circle cx="16" cy="3" r="2.500" />
            <circle cx="28" cy="3" r="2.500" />
          </svg>
        </Action>
      </Actions>
      <HomeBar />
    </Footer>
  </Page>
);

export default App;
